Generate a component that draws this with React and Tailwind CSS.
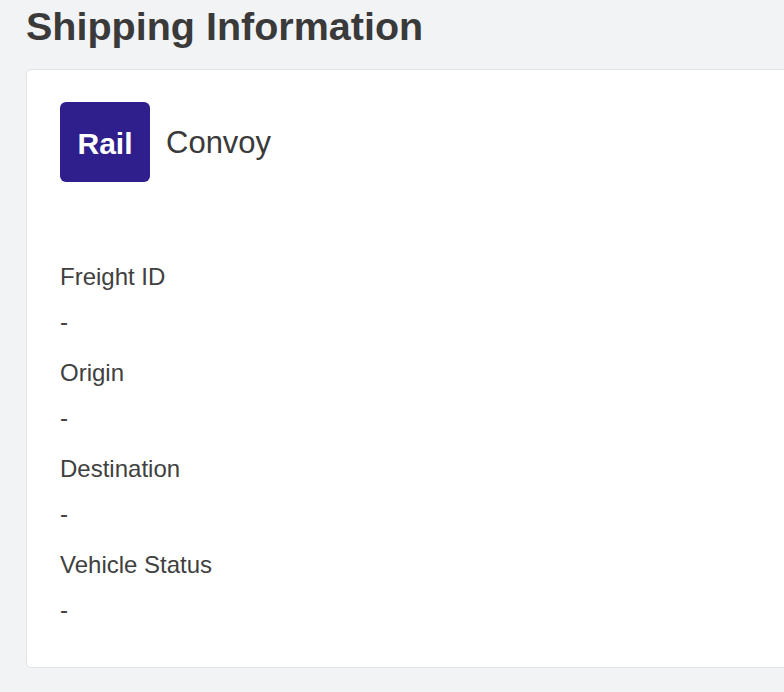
export default function App() {
  const items = ["Freight ID", "Origin", "Destination", "Vehicle Status"];
  return (
    <div
      className="w-[784px] h-[692px] overflow-hidden bg-[#f2f3f5] text-[#3d3d3d]"
      style={{ fontFamily: '"Liberation Sans", Arial, sans-serif' }}
    >
      <div className="pl-[26px] pt-[2px]">
        <h1 className="text-[39.5px] leading-[48px] font-bold text-[#3a3a3a]">Shipping Information</h1>
        <div className="mt-[19px] w-[800px] h-[599px] bg-white border border-[#e1e4e7] rounded-[5px] pt-[32px] pl-[33px]">
          <div className="flex items-center">
            <div className="w-[90px] h-[80px] rounded-[6px] bg-[#2f1f8c] flex items-center justify-center text-white text-[30px] font-bold pt-[2px]">
              Rail
            </div>
            <div className="ml-[16px] mt-[3px] text-[31px] text-[#3a3a3a]">Convoy</div>
          </div>
          <div className="mt-[79px]">
            {items.map((label) => (
              <div key={label} className="mb-[19px]">
                <div className="text-[24px] leading-[32px] text-[#404040]">{label}</div>
                <div className="mt-[13px] text-[24px] leading-[32px] text-[#404040]">-</div>
              </div>
            ))}
          </div>
        </div>
      </div>
    </div>
  );
}
